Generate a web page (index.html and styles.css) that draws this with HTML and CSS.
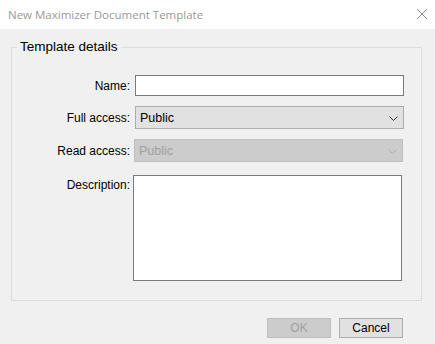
FILE: index.html
```html
<!DOCTYPE html>
<html lang="en">
<head>
  <meta charset="UTF-8">
  <title>New Maximizer Document Template</title>
  <link rel="stylesheet" href="styles.css">
</head>
<body>
  <div class="dialog">
    <div class="titlebar">
      <span class="title">New Maximizer Document Template</span>
      <svg class="close" width="12" height="12" viewBox="0 0 12 12">
        <path d="M1 1 L11 11 M11 1 L1 11" stroke="#8a8a8a" stroke-width="1" fill="none"/>
      </svg>
    </div>

    <fieldset class="details">
      <legend>Template details</legend>

      <div class="row">
        <label class="lbl">Name:</label>
        <input class="text" type="text">
      </div>

      <div class="row">
        <label class="lbl">Full access:</label>
        <div class="combo">
          <span>Public</span>
          <svg width="9" height="5" viewBox="0 0 9 5"><path d="M0.5 0.5 L4.5 4.5 L8.5 0.5" stroke="#333" fill="none"/></svg>
        </div>
      </div>

      <div class="row">
        <label class="lbl">Read access:</label>
        <div class="combo off">
          <span>Public</span>
          <svg width="9" height="5" viewBox="0 0 9 5"><path d="M0.5 0.5 L4.5 4.5 L8.5 0.5" stroke="#ababab" fill="none"/></svg>
        </div>
      </div>

      <div class="row top">
        <label class="lbl">Description:</label>
        <textarea class="desc"></textarea>
      </div>
    </fieldset>

    <div class="btns">
      <button class="btn off">OK</button>
      <button class="btn">Cancel</button>
    </div>
  </div>
</body>
</html>
```

FILE: styles.css
```css
*{
  box-sizing: border-box;
  margin: 0;
  padding: 0;
}
body{
  width: 435px;
  height: 344px;
  background: #f0f0f0;
  font-family: "Liberation Sans", Arial, sans-serif;
  font-size: 12px;
  color: #000;
  overflow: hidden;
}
.titlebar{
  height: 29px;
  background: #fff;
  display: flex;
  align-items: center;
  justify-content: space-between;
  padding: 0 7px 0 8px;
}
.title{
  font-family: "Open Sans", sans-serif;
  font-size: 11.5px;
  color: #999;
}
.close{
  margin-top: -1px;
}
.details{
  margin: 10px 13px 0 11px;
  border: 1px solid #dcdcdc;
  padding: 20px 0 19px 5px;
}
.details legend{
  font-size: 13.5px;
  line-height: 16px;
  padding: 0 3px;
}
.row{
  display: flex;
  align-items: center;
  margin-bottom: 10px;
}
.row.top{
  align-items: flex-start;
  margin-top: 13px;
  margin-bottom: 0;
}
.lbl{
  width: 118px;
  text-align: right;
  padding-right: 5px;
}
.row.top .lbl{
  padding-top: 3px;
}
.text{
  width: 269px;
  height: 21px;
  border: 1px solid #7a7a7a;
  background: #fff;
  outline: none;
}
.combo{
  width: 269px;
  height: 23px;
  background: #e1e1e1;
  border: 1px solid #adadad;
  display: flex;
  align-items: center;
  justify-content: space-between;
  padding: 0 5px 0 4px;
  font-size: 12.5px;
}
.combo svg{
  margin-top: 1px;
}
.combo.off{
  margin-left: -1px;
  background: #cccccc;
  border-color: #bfbfbf;
  color: #a0a0a0;
}
.desc{
  width: 269px;
  height: 106px;
  margin-left: -2px;
  border: 1px solid #7a7a7a;
  background: #fff;
  resize: none;
  outline: none;
}
.btns{
  display: flex;
  justify-content: flex-end;
  gap: 8px;
  padding: 17px 32px 0 0;
}
.btn{
  width: 64px;
  height: 20px;
  background: #e1e1e1;
  border: 1px solid #adadad;
  font-family: "Liberation Sans", Arial, sans-serif;
  font-size: 12px;
  color: #000;
}
.btn.off{
  background: #cccccc;
  border-color: #bfbfbf;
  color: #a0a0a0;
}
```
